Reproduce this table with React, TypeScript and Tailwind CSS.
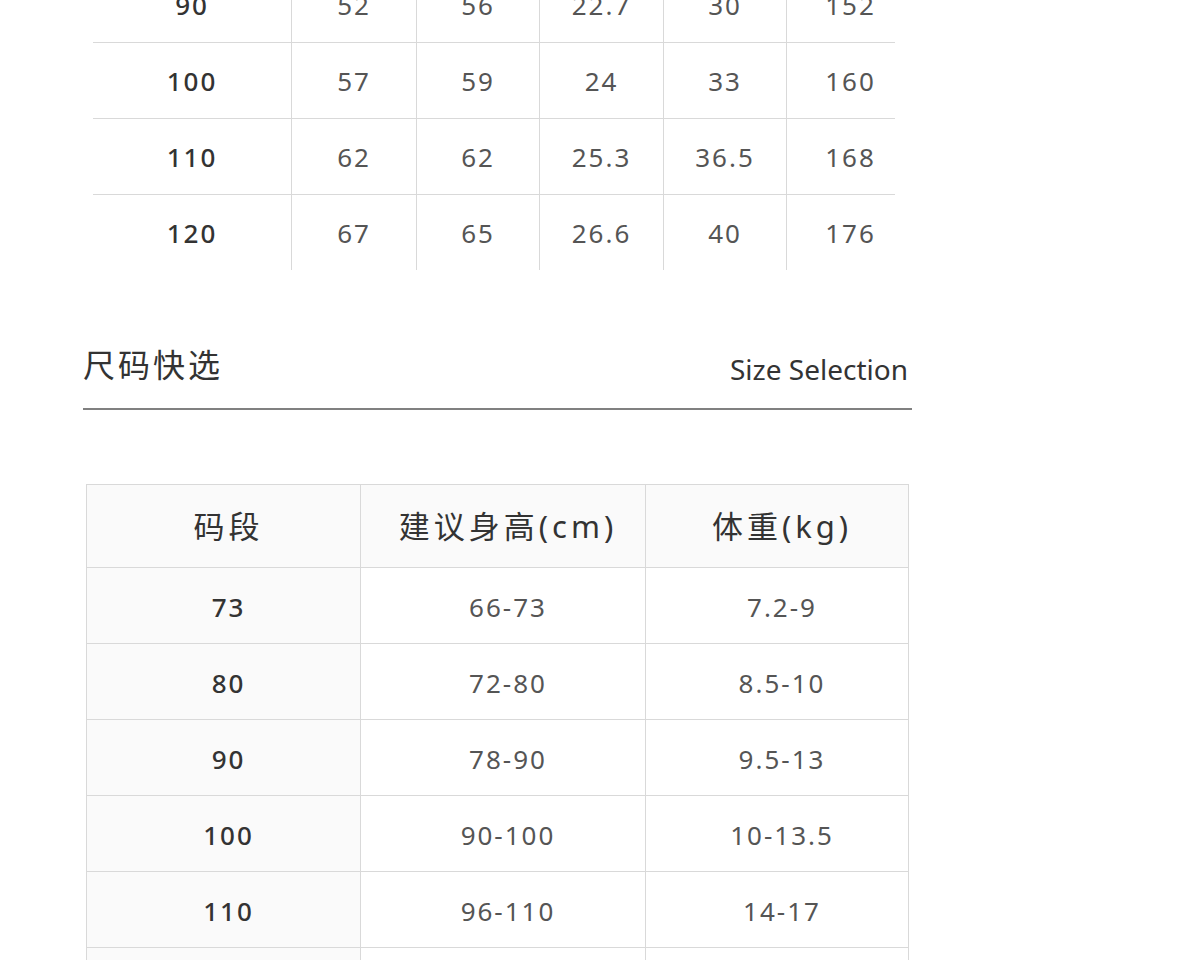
import * as React from 'react';

const measureRows = [
  ['90', '52', '56', '22.7', '30', '152'],
  ['100', '57', '59', '24', '33', '160'],
  ['110', '62', '62', '25.3', '36.5', '168'],
  ['120', '67', '65', '26.6', '40', '176'],
];

const quickRows = [
  ['73', '66-73', '7.2-9'],
  ['80', '72-80', '8.5-10'],
  ['90', '78-90', '9.5-13'],
  ['100', '90-100', '10-13.5'],
  ['110', '96-110', '14-17'],
  ['120', '102-120', '17-20'],
];

const MeasureTable: React.FC = () => (
  <div className="ml-[93px] w-[802px] -mt-[33px]">
    {measureRows.map((row, i) => (
      <div
        key={row[0]}
        className={
          i < measureRows.length - 1
            ? 'grid grid-cols-[198px_125px_123px_124px_123px_128px] h-[76px] border-b border-[#d9d9d9]'
            : 'grid grid-cols-[198px_125px_123px_124px_123px_128px] h-[75px]'
        }
      >
        {row.map((cell, j) => (
          <div
            key={j}
            className={
              j === 0
                ? 'flex items-center justify-center pt-[2px] text-[26px] font-medium tracking-[2px] text-[#333]'
                : 'flex items-center justify-center pt-[2px] border-l border-[#d9d9d9] text-[26px] tracking-[2px] text-[#555]'
            }
          >
            {cell}
          </div>
        ))}
      </div>
    ))}
  </div>
);

const QuickTable: React.FC = () => (
  <div className="ml-[86px] w-[823px] border border-[#d9d9d9]">
    <div className="grid grid-cols-[273px_285px_1fr] h-[82px] bg-[#fafafa] text-[31px] tracking-[4px] text-[#333]">
      <div className="flex items-center justify-center pl-[10px]">码段</div>
      <div className="flex items-center justify-center pl-[10px] border-l border-[#d9d9d9]">建议身高(cm)</div>
      <div className="flex items-center justify-center pl-[10px] border-l border-[#d9d9d9]">体重(kg)</div>
    </div>
    {quickRows.map((row) => (
      <div key={row[0]} className="grid grid-cols-[273px_285px_1fr] h-[76px] border-t border-[#d9d9d9]">
        <div className="flex items-center justify-center pl-[10px] pt-[3px] bg-[#fafafa] text-[26px] font-medium tracking-[2px] text-[#333]">
          {row[0]}
        </div>
        <div className="flex items-center justify-center pl-[10px] pt-[3px] border-l border-[#d9d9d9] text-[26px] tracking-[2px] text-[#555]">
          {row[1]}
        </div>
        <div className="flex items-center justify-center pl-[10px] pt-[3px] border-l border-[#d9d9d9] text-[26px] tracking-[2px] text-[#555]">
          {row[2]}
        </div>
      </div>
    ))}
  </div>
);

export default function App() {
  return (
    <div className="w-[1200px] bg-white font-['Noto_Sans','Noto_Sans_CJK_SC',sans-serif] overflow-hidden">
      <MeasureTable />

      <div className="ml-[83px] w-[829px] mt-[75px]">
        <div className="flex items-end justify-between">
          <h2 className="text-[32px] leading-[40px] tracking-[3px] text-[#333]">尺码快选</h2>
          <span className="pr-[4px] text-[28px] leading-[36px] text-[#333] translate-y-[2px]">Size Selection</span>
        </div>
        <div className="mt-[23px] h-[2px] bg-[#808080]" />
      </div>

      <div className="mt-[74px] pb-10">
        <QuickTable />
      </div>
    </div>
  );
}
